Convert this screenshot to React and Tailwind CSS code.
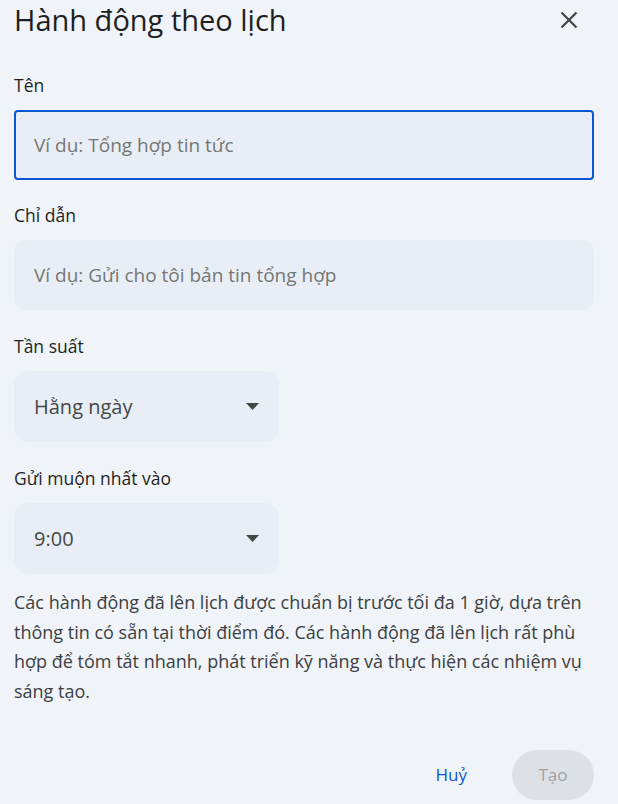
import React from 'react'

const font = { fontFamily: '"Open Sans", "Noto Sans", sans-serif' }

const Caret = () => (
  <svg width="13" height="7" viewBox="0 0 13 7" className="shrink-0">
    <polygon points="0,0 13,0 6.5,7" fill="#444746" />
  </svg>
)

const Label = ({ children }) => (
  <div className="h-[24px] leading-[24px] text-[17.5px] text-[#1f1f1f] mb-[13px]">{children}</div>
)

const SelectBox = ({ value }) => (
  <div className="w-[265px] h-[71px] rounded-[14px] bg-[#e9eef6] flex items-center justify-between pl-[20px] pr-[20px]">
    <span className="text-[20px] text-[#444746]">{value}</span>
    <Caret />
  </div>
)

const App = () => {
  return (
    <div className="w-[618px] h-[804px] bg-[#f0f4f9] pl-[14px] pr-[24px] flex flex-col overflow-hidden" style={font}>
      <div className="flex items-center justify-between h-[40px]">
        <h1 className="text-[29px] leading-[40px] text-[#1f1f1f]">Hành động theo lịch</h1>
        <button className="w-[40px] h-[40px] flex items-center justify-center mr-[5px]">
          <svg width="18" height="18" viewBox="0 0 18 18">
            <path d="M1.5 1.5 L16.5 16.5 M16.5 1.5 L1.5 16.5" stroke="#444746" strokeWidth="2.3" />
          </svg>
        </button>
      </div>

      <div className="mt-[33px]">
        <Label>Tên</Label>
        <div className="h-[70px] rounded-[4px] border-2 border-[#0b57d0] bg-[#e9eef6] flex items-center pl-[18px]">
          <span className="text-[19px] text-[#747775]">Ví dụ: Tổng hợp tin tức</span>
        </div>
      </div>

      <div className="mt-[23px]">
        <Label>Chỉ dẫn</Label>
        <div className="h-[70px] rounded-[12px] bg-[#e9eef6] flex items-center pl-[20px]">
          <span className="text-[19px] text-[#747775]">Ví dụ: Gửi cho tôi bản tin tổng hợp</span>
        </div>
      </div>

      <div className="mt-[24px]">
        <Label>Tần suất</Label>
        <SelectBox value="Hằng ngày" />
      </div>

      <div className="mt-[24px]">
        <Label>Gửi muộn nhất vào</Label>
        <SelectBox value="9:00" />
      </div>

      <p className="mt-[14px] text-[18px] leading-[29.5px] text-[#3c4043]">
        Các hành động đã lên lịch được chuẩn bị trước tối đa 1 giờ, dựa trên<br />
        thông tin có sẵn tại thời điểm đó. Các hành động đã lên lịch rất phù<br />
        hợp để tóm tắt nhanh, phát triển kỹ năng và thực hiện các nhiệm vụ<br />
        sáng tạo.
      </p>

      <div className="mt-auto mb-[4px] flex items-center justify-end">
        <button className="h-[50px] px-[22px] text-[17px] font-medium text-[#0b57d0] mr-[23px]">Huỷ</button>
        <button className="h-[50px] w-[82px] rounded-full bg-[#dde1e6] text-[17px] font-medium text-[#9ea2a6]">Tạo</button>
      </div>
    </div>
  )
}

export default App
